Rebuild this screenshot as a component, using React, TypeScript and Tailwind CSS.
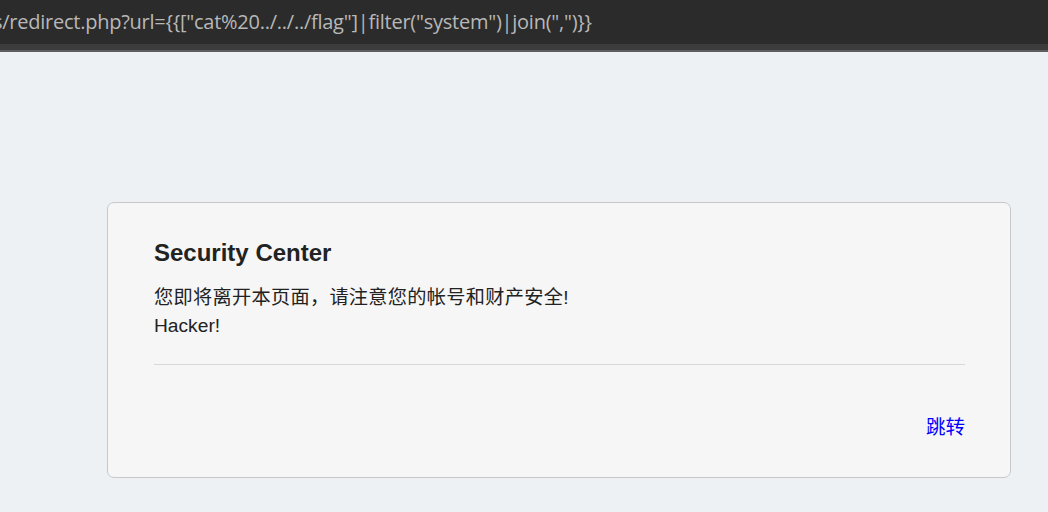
export default function App() {
  const url = 's/redirect.php?url={{["cat%20../../../flag"]|filter("system")|join(",")}}'

  return (
    <div className="w-[1048px] h-[512px] overflow-hidden bg-[#edf1f4] flex flex-col font-['Liberation_Sans','Noto_Sans_CJK_SC',sans-serif]">
      {/* Address bar */}
      <div className="h-[44px] bg-[#2b2b2b] flex items-center overflow-hidden">
        <span className="ml-[-7px] whitespace-nowrap text-[20px] text-[#b8b8b8] font-['Open_Sans',sans-serif] tracking-[-0.25px]">
          {url}
        </span>
      </div>
      <div className="h-[6px] bg-[#3c3c3c]" />
      <div className="h-[2px] bg-[#5e5e5e]" />

      <div className="flex-1 pt-[150px] pl-[107px] pr-[37px]">
        <div className="bg-[#f6f6f6] border border-[#c6c9cc] rounded-[7px] px-[45px] pt-[35px] pb-[36px] text-[#222]">
          <h1 className="pl-px text-[24px] font-bold leading-[29px]">Security Center</h1>
          <div className="pl-px mt-[17px] text-[19.2px] leading-[28px]">
            <p className="tracking-[0.3px]">您即将离开本页面，请注意您的帐号和财产安全!</p>
            <p>Hacker!</p>
          </div>
          <div className="ml-px mt-[24px] h-px bg-[#d8d8d8]" />
          <div className="mt-[48px] flex justify-end">
            <a className="text-[19.5px] leading-[28px] text-[#0000ff] cursor-pointer">跳转</a>
          </div>
        </div>
      </div>
    </div>
  )
}
